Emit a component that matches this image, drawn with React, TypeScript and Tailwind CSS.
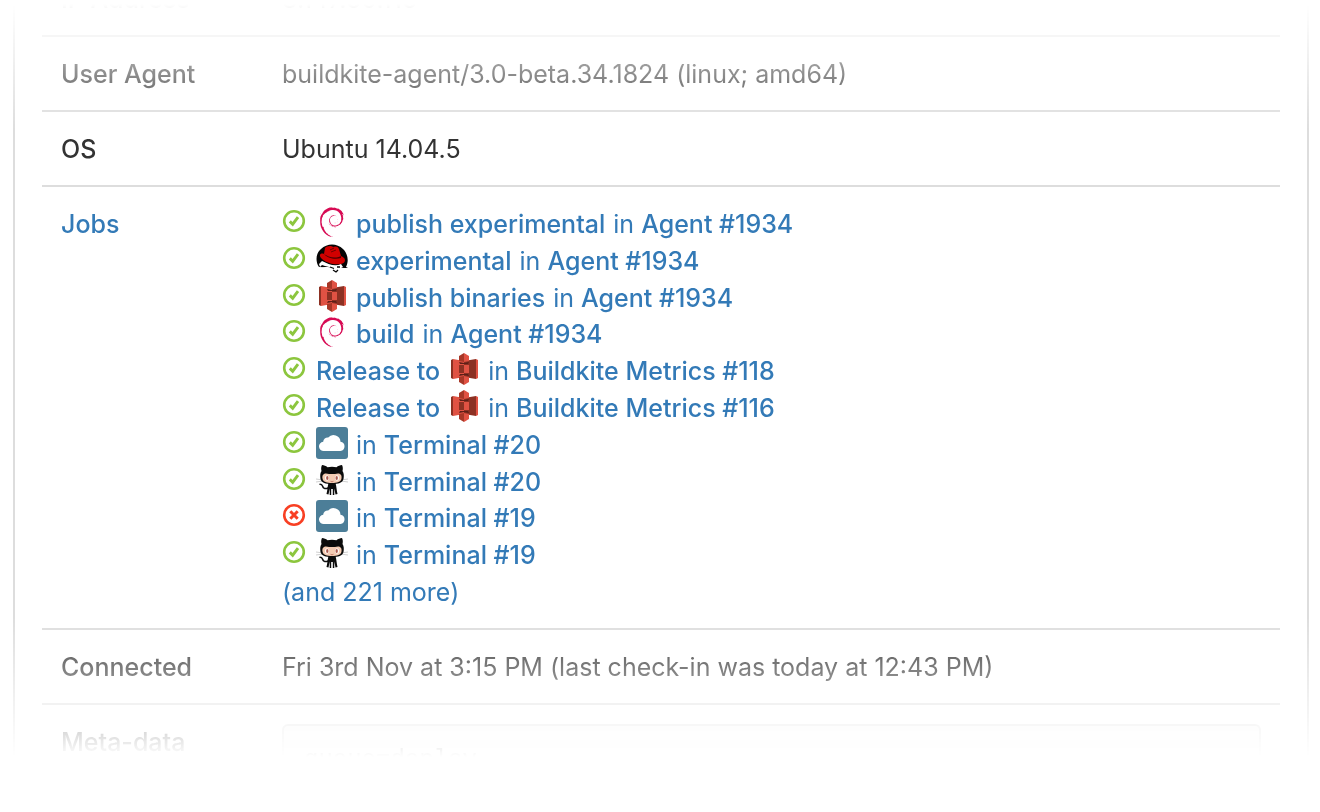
import type { ReactNode } from "react";
import { SiDebian } from "react-icons/si";

type IconName = "debian" | "redhat" | "s3" | "cloud" | "octocat";

type Job = {
  passed: boolean;
  label?: string;
  icon: IconName;
  iconAfter?: boolean;
  build: string;
};

const jobs: Job[] = [
  { passed: true, icon: "debian", label: "publish experimental", build: "Agent #1934" },
  { passed: true, icon: "redhat", label: "experimental", build: "Agent #1934" },
  { passed: true, icon: "s3", label: "publish binaries", build: "Agent #1934" },
  { passed: true, icon: "debian", label: "build", build: "Agent #1934" },
  { passed: true, icon: "s3", label: "Release to", iconAfter: true, build: "Buildkite Metrics #118" },
  { passed: true, icon: "s3", label: "Release to", iconAfter: true, build: "Buildkite Metrics #116" },
  { passed: true, icon: "cloud", build: "Terminal #20" },
  { passed: true, icon: "octocat", build: "Terminal #20" },
  { passed: false, icon: "cloud", build: "Terminal #19" },
  { passed: true, icon: "octocat", build: "Terminal #19" },
];

function StatusIcon({ passed }: { passed: boolean }) {
  return (
    <svg
      viewBox="0 0 24 24"
      className={passed ? "mb-[6px] mr-[10px] size-6 text-[#8cc63e]" : "mb-[6px] mr-[10px] size-6 text-[#f83f23]"}
      fill="none"
      stroke="currentColor"
      role="img"
      aria-label={passed ? "Passed" : "Failed"}
    >
      <circle cx="12" cy="12" r="9.8" strokeWidth="2.6" />
      {passed ? (
        <path d="M7.8 12.4l2.9 2.8 5.3-7" strokeWidth="2.9" />
      ) : (
        <path d="M8.3 8.3l7.4 7.4M15.7 8.3l-7.4 7.4" strokeWidth="3" />
      )}
    </svg>
  );
}

function JobIcon({ name }: { name: IconName }) {
  if (name === "debian") {
    return <SiDebian className="mb-1 size-8 p-px text-[#d70a53]" aria-hidden="true" />;
  }

  if (name === "redhat") {
    return (
      <svg viewBox="0 0 32 32" className="mb-1 size-8" aria-hidden="true">
        <path d="M3 24C-1 18 0 10 5 6c6-6 16-6 22 0 5 5 6 12 3 18l2 1-3 0z" fill="#050505" />
        <path
          d="M6 18c6 3 13 6 19 3l2 3-2 1-2 0 0 3-3 0-3-1-4-3-4-1-3-1-2 2-1-3z"
          fill="#fff"
        />
        <path d="M6 24l3 1 3-1 4 2 5 1 1 1-2 2-3-1-3-3-4-2z" fill="#fff" />
        <path d="M14 24l4 1.500M21 24l3 0M17 27l3 2 2-2" fill="none" stroke="#050505" strokeWidth="1.300" />
        <path
          d="M4 12c-1 3 6 8 13 9 7 1 12 0 12-4 0-2-2-3-4-4L23 6c-1-3-4-3-6-2-2-2-7-1-8 1L8 11c-2-1-4 0-4 1z"
          fill="#d10000"
        />
        <path d="M8 11c4 3 11 5 17 2v2c-6 2-14 0-17-4z" fill="#4a0000" />
        <path d="M14 7l4-2M15 9l5-2" stroke="#6e0000" strokeWidth="1" />
      </svg>
    );
  }

  if (name === "s3") {
    return (
      <svg viewBox="0 0 32 32" className="mb-1 size-8" aria-hidden="true">
        <path d="M3 7l2-1v20l-2-1z" fill="#8c3123" />
        <path d="M5 6l11 2v16L5 26z" fill="#e05243" />
        <path d="M30 7l-2-1v20l2-1z" fill="#e05243" />
        <path d="M28 6L16 8v16l12 2z" fill="#8c3123" />
        <path d="M11 9l5 1 5-1-1 2h-8zM11 23l5-1 5 1-1-2h-8z" fill="#5e1f18" />
        <path d="M11 3l5-3v9l-5-1z" fill="#a73727" />
        <path d="M21 3l-5-3v9l5-1z" fill="#e05243" />
        <path d="M11 29l5 3v-9l-5 1z" fill="#a73727" />
        <path d="M21 29l-5 3v-9l5 1z" fill="#e05243" />
        <path d="M11 12h5v8h-5z" fill="#8c3123" />
        <path d="M21 12h-5v8h5z" fill="#e05243" />
      </svg>
    );
  }

  if (name === "cloud") {
    return (
      <svg viewBox="0 0 32 32" className="mb-1 size-8" aria-hidden="true">
        <rect width="32" height="32" rx="3" fill="#4c7e98" />
        <path
          d="M8 24a4.600 4.600 0 0 1-.8-9.200 4.500 4.500 0 0 1 5-4.300 7 7 0 0 1 12.300 4.200A4.700 4.700 0 0 1 24.500 24z"
          fill="#fff"
        />
      </svg>
    );
  }

  return (
    <svg viewBox="0 0 32 32" className="mb-1 size-8" aria-hidden="true">
      <path d="M0 15l7 1M0 18l7-1M32 15l-7 1M32 18l-7-1" stroke="#bbb" strokeWidth=".7" />
      <path
        d="M12 24c-3 1.500-5 0-5.500-2-.6-1.500-1.500-1.700-2.500-1.700"
        fill="none"
        stroke="#111"
        strokeWidth="1.500"
        strokeLinecap="round"
      />
      <path
        d="M6 1c2 0 4 1 5.500 2.200a20 20 0 0 1 9 0C22 2 24 1 26 1c1 2 1 4 .5 6 1.500 2 1.500 5 1 8-1 4-5 5-11.500 5S5.500 19 4.500 15c-.5-3-.5-6 1-8C5 5 5 3 6 1z"
        fill="#0b0b0b"
      />
      <path
        d="M12.500 19h7c1 3 1 7 2 11l-2 .500-1.200-6v6.500h-1.500V25h-1.600v6h-1.500v-6.500l-1.200 6-2-.5c1-4 1-8 2-11z"
        fill="#0b0b0b"
      />
      <path
        d="M10 9.500c4 .8 8 .8 12 0 3 0 4 2.500 3.500 5-.5 3.500-4.500 4.500-9.500 4.500s-9-1-9.500-4.500C6 12 7 9.500 10 9.500z"
        fill="#f4cbb2"
      />
      <ellipse cx="11" cy="14" rx="2" ry="2.7" fill="#fff" />
      <ellipse cx="21" cy="14" rx="2" ry="2.7" fill="#fff" />
      <ellipse cx="11.3" cy="14" rx="1.2" ry="1.9" fill="#ad5c51" />
      <ellipse cx="20.7" cy="14" rx="1.2" ry="1.9" fill="#ad5c51" />
      <path d="M14.500 17.300q1.500 1 3 0" stroke="#ad5c51" strokeWidth=".7" fill="none" />
    </svg>
  );
}

function JobLine({ job }: { job: Job }) {
  return (
    <li className="flex h-9 items-center">
      <StatusIcon passed={job.passed} />
      <a href="#" className="flex items-center gap-2">
        {!job.iconAfter && <JobIcon name={job.icon} />}
        {job.label && <span className="font-medium">{job.label}</span>}
        {job.iconAfter && <JobIcon name={job.icon} />}
        <span>
          in <span className="font-medium">{job.build}</span>
        </span>
      </a>
    </li>
  );
}

function Row({ label, children }: { label: ReactNode; children: ReactNode }) {
  return (
    <tr className="border-t-2 border-[#ddd] align-top">
      <th scope="row" className="w-[220px] pb-[18px] pl-[19px] pt-[19px] text-left font-medium">
        {label}
      </th>
      <td className="pb-[18px] pl-5 pr-[19px] pt-[19px]">{children}</td>
    </tr>
  );
}

export default function App() {
  return (
    <main className="flex h-screen flex-col bg-white pb-[55px] pl-[13px] pr-[11px] font-['Inter','Liberation_Sans',sans-serif] text-[25px] leading-9 text-[#333]">
      <section className="min-h-0 flex-1 overflow-hidden border-x-2 border-[#ddd] px-[27px] [mask-image:linear-gradient(to_bottom,transparent_4px,black_130px,black_calc(100%-140px),transparent_100%)]">
        <table className="-mt-10 w-full border-collapse">
          <tbody>
            <Row label="IP Address">8.147.60.116</Row>
            <Row label="User Agent">buildkite-agent/3.0-beta.34.1824 (linux; amd64)</Row>
            <Row label="OS">Ubuntu 14.04.5</Row>
            <Row
              label={
                <a href="#" className="text-[#337ab7]">
                  Jobs
                </a>
              }
            >
              <ul className="flex h-[404px] flex-col justify-between text-[#337ab7]">
                {jobs.map((job, index) => (
                  <JobLine key={index} job={job} />
                ))}
                <li>
                  <a href="#">(and 221 more)</a>
                </li>
              </ul>
            </Row>
            <Row label="Connected">Fri 3rd Nov at 3:15 PM (last check-in was today at 12:43 PM)</Row>
            <Row label="Meta-data">
              <pre className="rounded-md border-2 border-[#ddd] bg-[#f7f7f7] px-5 py-4 font-['Liberation_Mono',monospace] text-[24px]">
                queue=deploy
              </pre>
            </Row>
          </tbody>
        </table>
      </section>
    </main>
  );
}
